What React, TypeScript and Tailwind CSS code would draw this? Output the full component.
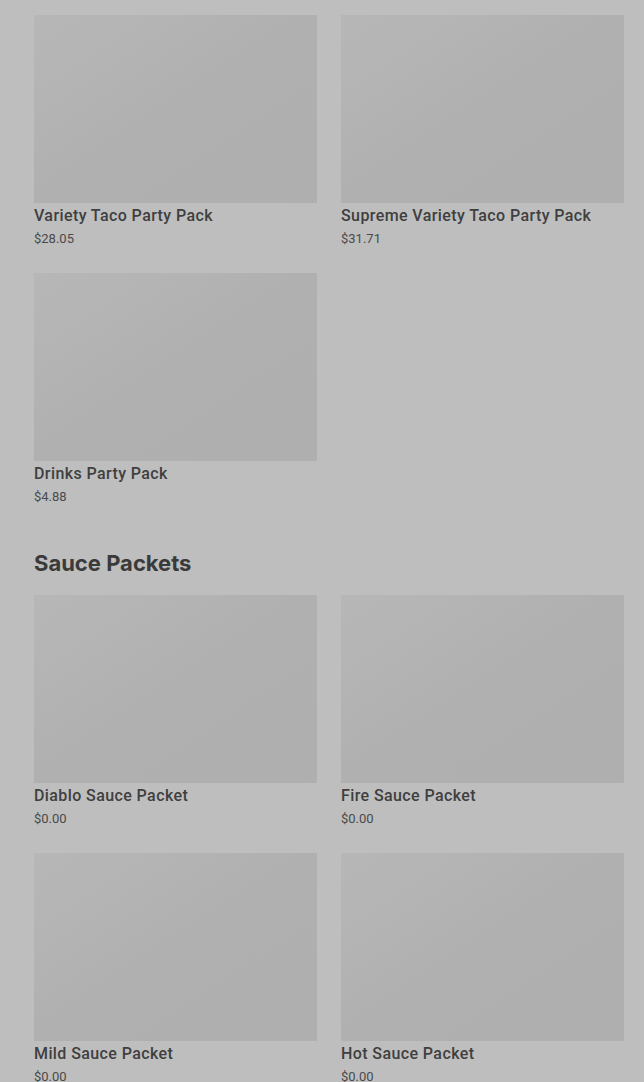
import React from "react";

type Item = { name: string; price: string };

function Card({ item }: { item: Item }) {
  return (
    <div className="flex flex-col">
      <div className="h-[188px] w-full bg-gradient-to-br from-[#b7b7b7] via-[#b0b0b0] to-[#afafaf]" />
      <div
        className="mt-[2px] h-[22px] text-[16px] leading-[22px] font-medium tracking-[0.4px] text-[#3f3f3f]"
        style={{ fontFamily: "Roboto, 'Noto Sans', sans-serif" }}
      >
        {item.name}
      </div>
      <div
        className="h-[24px] text-[13px] leading-[24px] text-[#4a4a4a]"
        style={{ fontFamily: "Roboto, 'Noto Sans', sans-serif" }}
      >
        {item.price}
      </div>
    </div>
  );
}

function Grid({ items }: { items: Item[] }) {
  return (
    <div className="grid grid-cols-2 gap-x-[24px] gap-y-[22px]">
      {items.map((it) => (
        <Card key={it.name} item={it} />
      ))}
    </div>
  );
}

export default function App() {
  const party: Item[] = [
    { name: "Variety Taco Party Pack", price: "$28.05" },
    { name: "Supreme Variety Taco Party Pack", price: "$31.71" },
    { name: "Drinks Party Pack", price: "$4.88" },
  ];
  const sauce: Item[] = [
    { name: "Diablo Sauce Packet", price: "$0.00" },
    { name: "Fire Sauce Packet", price: "$0.00" },
    { name: "Mild Sauce Packet", price: "$0.00" },
    { name: "Hot Sauce Packet", price: "$0.00" },
  ];
  return (
    <div
      className="h-[1082px] overflow-hidden bg-[#bebebe] pl-[34px] pr-[20px] pt-[15px]"
      style={{ fontFamily: "Inter, 'Noto Sans', sans-serif" }}
    >
      <Grid items={party} />
      <h2 className="mt-[40px] mb-[18px] h-[28px] text-[22px] leading-[28px] font-bold text-[#3a3a3a]">Sauce Packets</h2>
      <Grid items={sauce} />
    </div>
  );
}
